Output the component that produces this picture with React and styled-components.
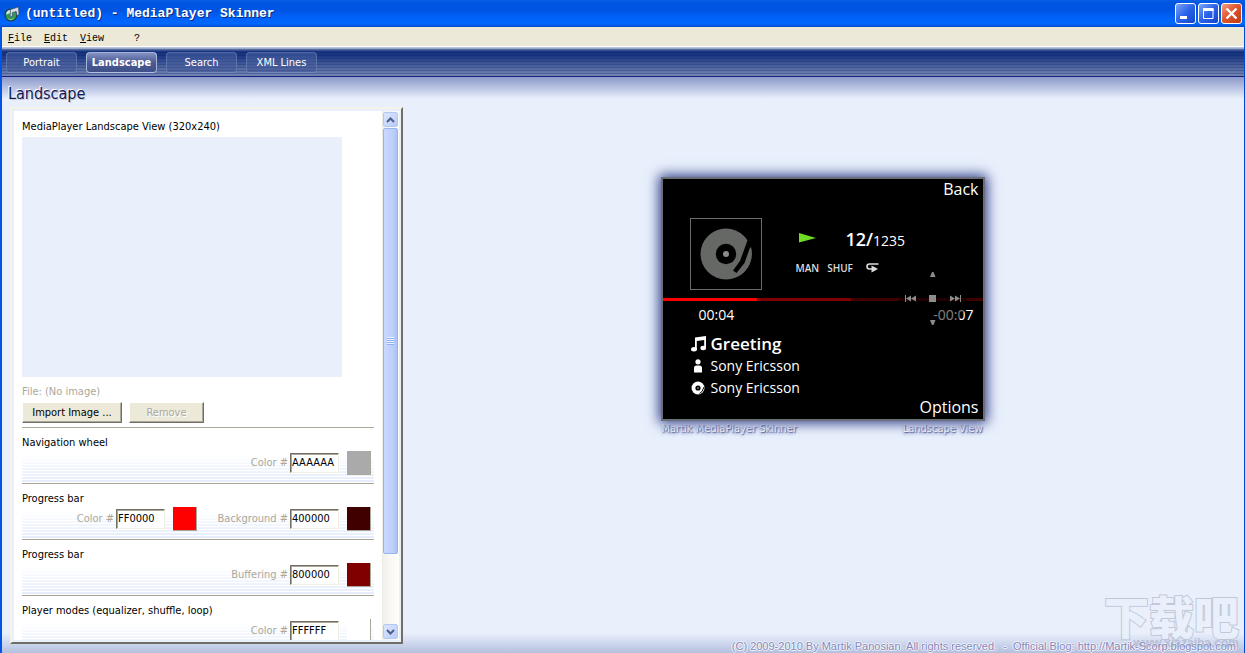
import React, { useState } from "react";
import styled, { createGlobalStyle } from "styled-components";

const ui = `"DejaVu Sans Condensed", "DejaVu Sans", sans-serif`;
const device = `"Open Sans", "Noto Sans", sans-serif`;
const mono = `"Liberation Mono", monospace`;

const GlobalStyle = createGlobalStyle`
  * {
    box-sizing: border-box;
  }

  body {
    margin: 0;
    overflow: hidden;
    font-family: ${ui};
    font-size: 11px;
    line-height: 14px;
  }

  button, input {
    font: inherit;
  }
`;

const Window = styled.div`
  display: flex;
  flex-direction: column;
  height: 100vh;
  background: #e9f0fc;
`;

const TitleBar = styled.header`
  display: flex;
  align-items: center;
  gap: 5px;
  height: 27px;
  padding: 0 3px 0 4px;
  background: linear-gradient(
    #0a5fe8 0,
    #0055e0 3px,
    #0054e3 10px,
    #0062fa 18px,
    #0068ff 24px,
    #0048c8 27px
  );
`;

const Title = styled.h1`
  flex: 1;
  margin: 0;
  color: #fff;
  font-family: ${mono};
  font-size: 13px;
  font-weight: bold;
  line-height: 16px;
  text-shadow: 1px 1px 0 #0a2a80;
`;

const CaptionButton = styled.button`
  display: flex;
  width: 21px;
  height: 21px;
  margin-left: -3px;
  padding: 0;
  border: 1px solid #fff;
  border-radius: 3px;
  background: ${p =>
    p.$close
      ? "linear-gradient(135deg, #f0a088, #e0562f 45%, #c03a10)"
      : "linear-gradient(135deg, #7ea4f8, #2a62ea 50%, #1446cc)"};
`;

const Frame = styled.div`
  display: flex;
  flex: 1;
  flex-direction: column;
  min-height: 0;
  border-left: 2px solid #0055e5;
  border-right: 1px solid #0046d0;
`;

const MenuBar = styled.nav`
  display: flex;
  gap: 12px;
  height: 20px;
  padding: 4px 6px 0;
  border-bottom: 1px solid #fff;
  background: #ece9d8;
`;

const MenuItem = styled.button`
  padding: 0;
  border: 0;
  margin-left: ${p => (p.$spaced ? "18px" : "0")};
  background: none;
  color: #000;
  font-family: ${mono};
  font-size: 10px;
  line-height: 12px;
`;

const Toolbar = styled.nav`
  display: flex;
  align-items: center;
  gap: 9px;
  height: 30px;
  padding: 2px 4px 0;
  border-bottom: 1px solid #14247a;
  background: repeating-linear-gradient(
      transparent 0,
      transparent 2px,
      rgba(8, 26, 96, 0.25) 2px,
      rgba(8, 26, 96, 0.25) 3px
    ),
    linear-gradient(
      #c4cfe2 0,
      #8fa0c4 2px,
      #183680 4px,
      #183580 8px,
      #4f659f 20px,
      #7384b2 29px
    );
`;

const Tab = styled.button`
  width: 71px;
  height: 21px;
  padding: 1px 0 0;
  border: 1px solid
    ${p => (p.$active ? "rgba(190, 202, 236, 0.8)" : "rgba(130, 150, 200, 0.45)")};
  border-radius: 4px;
  background: ${p =>
    p.$active
      ? "linear-gradient(#8492c2, #4a5a92 50%, #3f4f88)"
      : "linear-gradient(rgba(110, 132, 188, 0.35), rgba(60, 80, 145, 0.5))"};
  color: #fff;
  font-weight: ${p => (p.$active ? "bold" : "normal")};
  line-height: 18px;
`;

const Workspace = styled.main`
  display: grid;
  flex: 1;
  grid-template-columns: 401px 1fr;
  min-height: 0;
  background: linear-gradient(#8c98ca 0, rgba(233, 240, 252, 0) 22px),
    linear-gradient(to top, #b4bfdf 0, rgba(233, 240, 252, 0) 20px), #e9f0fc;
`;

const Editor = styled.section`
  display: flex;
  flex-direction: column;
  min-height: 0;
  padding: 0 0 9px 8px;
`;

const PageTitle = styled.h2`
  height: 30px;
  margin: 0 0 0 -2px;
  padding-top: 7px;
  color: #10185c;
  font-size: 16px;
  font-weight: normal;
  line-height: 20px;
  text-shadow: 1px 1px 0 #c8c8c8, -1px -1px 0 #fff;
`;

const Panel = styled.div`
  display: grid;
  flex: 1;
  grid-template-columns: 1fr 17px;
  min-height: 0;
  padding: 2px;
  border: 2px solid;
  border-color: #f4f3ea #716f64 #716f64 #f4f3ea;
  background: #e9f0fc;
`;

const PanelBody = styled.div`
  min-height: 0;
  padding: 9px 8px 0;
  overflow: hidden;
  background: #fff;
`;

const Heading = styled.h3`
  margin: 0;
  font-size: 11px;
  font-weight: normal;
`;

const Preview = styled.div`
  width: 320px;
  height: 240px;
  margin: 3px 0 8px;
  background: #e9f0fc;
`;

const FileName = styled.p`
  margin: 0;
  color: #aca899;
`;

const ButtonRow = styled.div`
  display: flex;
  gap: 7px;
  padding: 3px 0 4px;
  border-bottom: 1px solid #aca899;
`;

const PushButton = styled.button`
  width: ${p => p.$width}px;
  height: 21px;
  padding: 0;
  border: 1px solid;
  border-color: #fff #716f64 #716f64 #fff;
  box-shadow: inset -1px -1px 0 #aca899;
  background: #ece9d8;
  color: #000;
  line-height: 18px;

  &:disabled {
    color: #aca899;
    text-shadow: 1px 1px 0 #fff;
  }
`;

const Section = styled.section`
  height: 56px;
  padding: 8px 3px 0 0;
  border-bottom: 1px solid #aca899;
  background: linear-gradient(#fff 27px, rgba(255, 255, 255, 0) 56px),
    repeating-linear-gradient(to top, #fff 0, #fff 1px, #e2ebfc 1px, #e2ebfc 3px);
`;

const Fields = styled.div`
  display: grid;
  grid-template-columns: 1fr 174px;
  margin-top: 1px;
`;

const Field = styled.div`
  display: flex;
  grid-column: ${p => p.$column};
  align-items: center;
  justify-content: flex-end;
  color: #aca899;
`;

const HexInput = styled.input`
  width: 49px;
  height: 20px;
  margin: 0 8px 0 2px;
  padding: 0 0 1px 1px;
  border: 1px solid;
  border-color: #716f64 #f1efe2 #f1efe2 #716f64;
  box-shadow: inset 1px 1px 0 #aca899;
  background: #fff;
  color: #000;
`;

const Swatch = styled.button`
  width: 24px;
  height: 24px;
  padding: 0;
  border: 0 solid #aca899;
  border-width: 0 1px 1px 0;
  background: ${p => p.$color};
`;

const ScrollBar = styled.div`
  display: flex;
  flex-direction: column;
  gap: 1px;
  padding: 1px 1px 1px 0;
  border-left: 1px solid #eeede5;
  background: linear-gradient(to right, #f3f1ec, #fefefb);
`;

const ScrollButton = styled.button`
  display: flex;
  align-items: center;
  justify-content: center;
  height: 15px;
  padding: 0;
  border: 1px solid #b4c8f6;
  border-radius: 2px;
  background: linear-gradient(135deg, #dce6ff, #b9cbf9);
`;

const ScrollTrack = styled.div`
  flex: 1;
`;

const ScrollThumb = styled.div`
  display: flex;
  align-items: center;
  justify-content: center;
  height: 86%;
  border: 1px solid #98b4ee;
  border-radius: 2px;
  background: linear-gradient(to right, #c9d8ff, #bccffb 70%, #aac2f6);
`;

const Grip = styled.span`
  width: 7px;
  height: 8px;
  background: repeating-linear-gradient(#eef4fe 0, #eef4fe 1px, #8cb0f8 1px, #8cb0f8 2px);
`;

const Stage = styled.section`
  position: relative;
  display: flex;
  flex-direction: column;
  align-items: center;
  justify-content: space-between;
  padding: 100px 8px 0 6px;
`;

const Device = styled.figure`
  width: 324px;
  margin: 0;
`;

const Screen = styled.div`
  position: relative;
  height: 244px;
  border: 2px solid #6d6f78;
  background: #000;
  box-shadow: 0 0 12px 2px #2c3a86;
  color: #fff;
  font-family: ${device};
  font-size: 14px;
  line-height: 20px;
`;

const SoftKey = styled.div`
  padding: 0 4px;
  font-size: 16px;
  font-weight: 500;
  line-height: ${p => p.$height}px;
  text-align: right;
`;

const NowPlaying = styled.div`
  display: flex;
  padding: 19px 0 8px 27px;
`;

const Cover = styled.div`
  width: 72px;
  height: 72px;
  border: 1px solid #6c6c6c;
`;

const Status = styled.div`
  display: flex;
  flex-direction: column;
  gap: 7px;
  padding: 11px 0 0 34px;
`;

const TrackCount = styled.div`
  display: flex;
  align-items: baseline;
  padding-left: 3px;

  svg {
    align-self: flex-start;
    margin-top: 4px;
  }
`;

const TrackIndex = styled.span`
  margin-left: 30px;
  font-size: 18px;
  font-weight: 600;
`;

const Modes = styled.div`
  display: flex;
  align-items: center;
  gap: 8px;
  color: #ddd;
  font-size: 10px;
  font-weight: 600;
`;

const LoopIcon = styled.svg`
  margin-left: 5px;
`;

const ProgressTrack = styled.div`
  display: flex;
  height: 3px;
  background: #400000;
`;

const ProgressPart = styled.div`
  background: ${p => p.$color};
`;

const Times = styled.div`
  display: flex;
  justify-content: space-between;
  padding: 4px 9px 8px 36px;
`;

const TrackLine = styled.div`
  display: flex;
  align-items: center;
  gap: 5px;
  height: 22px;
  padding-left: 28px;
  font-size: ${p => (p.$large ? 17 : 14)}px;
  font-weight: ${p => (p.$large ? 600 : 400)};
`;

const Wheel = styled.svg`
  position: absolute;
  top: 84px;
  right: 15px;
`;

const Caption = styled.figcaption`
  display: flex;
  justify-content: space-between;
  padding: 1px 2px 0 1px;
  color: #fff;
  text-shadow: 1px 1px 1px #5a6598, 0 2px 3px #8d98c4;
`;

const Footer = styled.footer`
  align-self: flex-end;
  color: #8587b8;
  font-family: "Liberation Sans", sans-serif;
  white-space: pre;
  text-shadow: 1px 0 0 #f2f5fd, -1px 0 0 #f2f5fd, 0 1px 0 #f2f5fd, 0 -1px 0 #f2f5fd;

  a {
    color: inherit;
    text-decoration: none;
  }
`;

const Watermark = styled.div`
  position: absolute;
  right: 5px;
  bottom: 9px;
  color: #eaf0fc;
  font-family: "Noto Sans CJK SC", sans-serif;
  font-size: 45px;
  font-weight: 900;
  line-height: 56px;
  opacity: 0.75;
  paint-order: stroke;
  pointer-events: none;
  -webkit-text-stroke: 2px #b4bbcc;
`;

const WatermarkUrl = styled.div`
  position: absolute;
  right: 5px;
  bottom: 3px;
  color: rgba(150, 155, 185, 0.45);
  font-family: "Liberation Sans", sans-serif;
  font-size: 12px;
  font-weight: bold;
  pointer-events: none;
`;

const AppIcon = () => (
  <svg width="16" height="16" viewBox="0 0 16 16">
    <circle cx="7" cy="9" r="6.5" fill="#1d3b3a" />
    <circle cx="7" cy="9" r="5.4" fill="#2f9a56" />
    <path d="M2 8.500a5.400 5.400 0 0 1 5-4.800l-1 3.500z" fill="#d4ecdd" />
    <path d="M6.500 3.500 14.500 1l.5 7.500-2 1-.8-4-4 1.200.3 3-2.500 1.500z" fill="#d7dce6" stroke="#3b4c66" strokeWidth="0.700" />
    <path d="M3 12q4 2.500 8-.500-3.500 4.500-8 .500z" fill="#a6e0b8" />
  </svg>
);

const PlaySymbol = () => (
  <svg width="17" height="10" viewBox="0 0 17 10">
    <path d="M0 0 17 5 0 9.500z" fill="#6fdc24" />
  </svg>
);

const Turntable = () => (
  <svg width="70" height="70" viewBox="0 0 70 70">
    <circle cx="35" cy="35" r="25.500" fill="#666866" />
    <circle cx="35" cy="35" r="10.200" fill="#000" />
    <circle cx="35" cy="35" r="3" fill="#8a8a8a" />
    <path d="M57 20 61 13 62 28 59 28.500 53.500 44 45.500 54 42 51.500 49 42z" fill="#000" />
    <path d="M60 28A25.500 25.500 0 0 1 46 58L53.500 46z" fill="#666866" />
  </svg>
);

const NoteIcon = () => (
  <svg width="15" height="16" viewBox="0 0 15 16" fill="#fff">
    <path d="M4 1.500 15 0v12h-1.800V4L5.800 5v9H4z" />
    <ellipse cx="3" cy="13.300" rx="2.900" ry="2.200" />
    <ellipse cx="12.200" cy="12" rx="2.800" ry="2.200" />
  </svg>
);

const PersonIcon = () => (
  <svg width="15" height="14" viewBox="0 0 15 14" fill="#fff">
    <circle cx="7" cy="2.800" r="2.600" />
    <path d="M3 13.500V9q0-2.600 2.500-2.600h3Q11 6.400 11 9v4.500z" />
  </svg>
);

const DiscIcon = () => (
  <svg width="15" height="14" viewBox="0 0 15 14">
    <circle cx="7" cy="7" r="6.500" fill="#fff" />
    <circle cx="7" cy="7" r="2.600" fill="#000" />
    <circle cx="7" cy="7" r="0.800" fill="#ccc" />
    <path d="M13 6 11 10.500 8.500 12.500" fill="none" stroke="#000" strokeWidth="1" />
  </svg>
);

const Chevron = ({ down }) => (
  <svg width="9" height="6" viewBox="0 0 9 6">
    <path d={down ? "M1 1 4.500 4.500 8 1" : "M1 5 4.500 1.500 8 5"} fill="none" stroke="#4d6185" strokeWidth="2" />
  </svg>
);

const tabs = ["Portrait", "Landscape", "Search", "XML Lines"];

const sections = [
  { title: "Navigation wheel", fields: [{ id: "wheel", label: "Color #", column: 2 }] },
  {
    title: "Progress bar",
    fields: [
      { id: "progress", label: "Color #", column: 1 },
      { id: "background", label: "Background #", column: 2 }
    ]
  },
  { title: "Progress bar", fields: [{ id: "buffering", label: "Buffering #", column: 2 }] },
  {
    title: "Player modes (equalizer, shuffle, loop)",
    fields: [{ id: "modes", label: "Color #", column: 2 }]
  }
];

const MediaScreen = ({ colors }) => (
  <Screen>
    <SoftKey $height={20}>Back</SoftKey>
    <NowPlaying>
      <Cover>
        <Turntable />
      </Cover>
      <Status>
        <TrackCount>
          <PlaySymbol />
          <TrackIndex>12/</TrackIndex>
          1235
        </TrackCount>
        <Modes>
          <span>MAN</span>
          <span>SHUF</span>
          <LoopIcon width="13" height="10" viewBox="0 0 13 10">
            <path d="M12.500 1H3.500Q1 1 1 3.500T3.500 6H6" fill="none" stroke="#ddd" strokeWidth="1.600" />
            <path d="M5.500 2.500 12 6 5.500 9.500z" fill="#ddd" />
          </LoopIcon>
        </Modes>
      </Status>
    </NowPlaying>
    <ProgressTrack>
      <ProgressPart $color={"#" + colors.progress} style={{ width: `${(94 / 320) * 100}%` }} />
      <ProgressPart $color={"#" + colors.buffering} style={{ width: `${(94 / 320) * 100}%` }} />
    </ProgressTrack>
    <Times>
      <span>00:04</span>
      <span>-00:07</span>
    </Times>
    <TrackLine $large>
      <NoteIcon />
      Greeting
    </TrackLine>
    <TrackLine>
      <PersonIcon />
      Sony Ericsson
    </TrackLine>
    <TrackLine>
      <DiscIcon />
      Sony Ericsson
    </TrackLine>
    <SoftKey $height={16}>Options</SoftKey>
    <Wheel width="70" height="70" viewBox="0 0 70 70" fill="#8c8c8c">
      <circle cx="35" cy="35" r="34" fill="#000" fillOpacity="0.500" />
      <path d="M34 9h1.500l2 5h-5.500zM32 57h5.500l-2 5H34z" />
      <path d="M31 32h7v7h-7zM7 32h1v7H7zM62 32h1v7h-1z" />
      <path d="M13 32.500v6L8 35.500zM18 32.500v6l-5-3zM52 32.500v6l5-3zM57 32.500v6l5-3z" />
    </Wheel>
  </Screen>
);

const App = () => {
  const [tab, setTab] = useState("Landscape");
  const [colors, setColors] = useState({
    wheel: "AAAAAA",
    progress: "FF0000",
    background: "400000",
    buffering: "800000",
    modes: "FFFFFF"
  });

  const changeHandler = e => {
    setColors({ ...colors, [e.target.name]: e.target.value });
  };

  return (
    <Window>
      <GlobalStyle />
      <TitleBar>
        <AppIcon />
        <Title>(untitled) - MediaPlayer Skinner</Title>
        <CaptionButton aria-label="Minimize">
          <svg width="19" height="19" viewBox="0 0 19 19">
            <path d="M4 12h7v3H4z" fill="#fff" />
          </svg>
        </CaptionButton>
        <CaptionButton aria-label="Maximize">
          <svg width="19" height="19" viewBox="0 0 19 19">
            <path d="M4.500 5v9.500h9.500V5M4 5.500h10.500" fill="none" stroke="#fff" />
            <path d="M4 4h10.500v3H4z" fill="#fff" />
          </svg>
        </CaptionButton>
        <CaptionButton $close aria-label="Close">
          <svg width="19" height="19" viewBox="0 0 19 19">
            <path d="M4.500 4.500 14.500 14.500M14.500 4.500 4.500 14.500" stroke="#fff" strokeWidth="2.400" />
          </svg>
        </CaptionButton>
      </TitleBar>
      <Frame>
        <MenuBar>
          <MenuItem><u>F</u>ile</MenuItem>
          <MenuItem><u>E</u>dit</MenuItem>
          <MenuItem><u>V</u>iew</MenuItem>
          <MenuItem $spaced>?</MenuItem>
        </MenuBar>
        <Toolbar>
          {tabs.map(name => (
            <Tab key={name} $active={name === tab} onClick={() => setTab(name)}>
              {name}
            </Tab>
          ))}
        </Toolbar>
        <Workspace>
          <Editor>
            <PageTitle>{tab}</PageTitle>
            <Panel>
              <PanelBody>
                <Heading>MediaPlayer Landscape View (320x240)</Heading>
                <Preview />
                <FileName>File: (No image)</FileName>
                <ButtonRow>
                  <PushButton $width={100}>Import Image ...</PushButton>
                  <PushButton $width={75} disabled>Remove</PushButton>
                </ButtonRow>
                {sections.map((section, i) => (
                  <Section key={i}>
                    <Heading>{section.title}</Heading>
                    <Fields>
                      {section.fields.map(field => (
                        <Field key={field.id} $column={field.column}>
                          <label htmlFor={field.id}>{field.label}</label>
                          <HexInput
                            id={field.id}
                            name={field.id}
                            maxLength={6}
                            value={colors[field.id]}
                            onChange={changeHandler}
                          />
                          <Swatch $color={"#" + colors[field.id]} aria-label={"Pick " + field.id} />
                        </Field>
                      ))}
                    </Fields>
                  </Section>
                ))}
              </PanelBody>
              <ScrollBar>
                <ScrollButton aria-label="Scroll up">
                  <Chevron />
                </ScrollButton>
                <ScrollTrack>
                  <ScrollThumb>
                    <Grip />
                  </ScrollThumb>
                </ScrollTrack>
                <ScrollButton aria-label="Scroll down">
                  <Chevron down />
                </ScrollButton>
              </ScrollBar>
            </Panel>
          </Editor>
          <Stage>
            <Device>
              <MediaScreen colors={colors} />
              <Caption>
                <span>Martik MediaPlayer Skinner</span>
                <span>Landscape View</span>
              </Caption>
            </Device>
            <Watermark>下载吧</Watermark>
            <WatermarkUrl>www.xiazaiba.com</WatermarkUrl>
            <Footer>
              {"(C) 2009-2010 By Martik Panosian. All rights reserved.  -  Official Blog: "}
              <a href="http://Martik-Scorp.blogspot.com">http://Martik-Scorp.blogspot.com</a>
            </Footer>
          </Stage>
        </Workspace>
      </Frame>
    </Window>
  );
};

export default App;
